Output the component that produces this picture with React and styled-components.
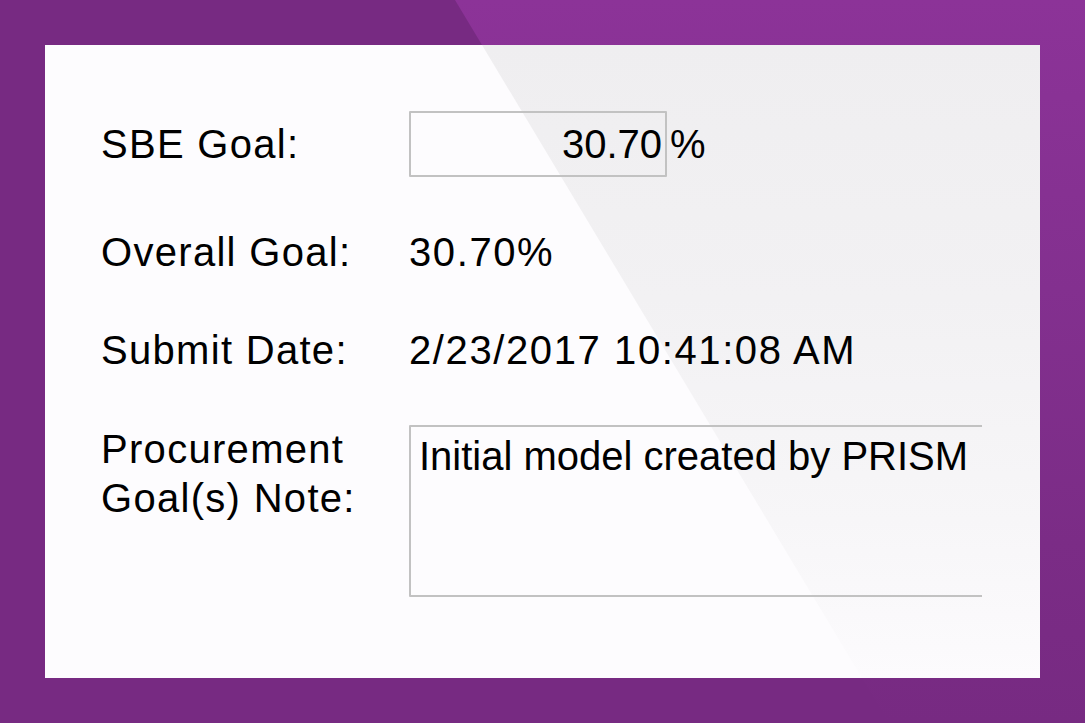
import React from "react";
import styled, { createGlobalStyle } from "styled-components";

const Global = createGlobalStyle`
  html, body { margin: 0; padding: 0; }
  body {
    background: #772a82;
    font-family: "Liberation Sans", Arial, sans-serif;
    overflow: hidden;
  }
`;

const Stage = styled.div`
  position: relative;
  width: 1085px;
  height: 723px;
  box-sizing: border-box;
  padding: 45px;
  background: #772a82;
  overflow: hidden;

  &::before {
    content: "";
    position: absolute;
    inset: 0;
    background: linear-gradient(to bottom, #8c3398 0%, #83308f 40%, #7b2c86 75%, #772a82 100%);
    clip-path: polygon(455px 0, 100% 0, 100% 100%, 889px 100%);
  }
`;

const Card = styled.section`
  position: relative;
  width: 995px;
  height: 633px;
  box-sizing: border-box;
  padding: 66px 0 0 56px;
  background: #fdfcfe;
  overflow: hidden;

  &::before {
    content: "";
    position: absolute;
    inset: 0;
    background: linear-gradient(to bottom, #efeef0 0%, #f2f1f3 40%, #f7f6f8 75%, #fcfbfd 100%);
    clip-path: polygon(437px 0, 100% 0, 100% 100%, 817px 100%);
  }
`;

const Form = styled.div`
  position: relative;
  display: grid;
  grid-template-columns: 308px 1fr;
  row-gap: 52px;
  align-items: center;
  color: #000;
  font-size: 40px;
  line-height: 46px;
`;

const Label = styled.div`
  white-space: nowrap;
  letter-spacing: 1.3px;
  line-height: ${(p) => p.$lh || "46px"};
  align-self: ${(p) => (p.$top ? "start" : "center")};
`;

const Value = styled.div`
  white-space: nowrap;
  letter-spacing: 1.6px;
`;

const InputRow = styled.div`
  display: flex;
  align-items: center;
  height: 66px;
`;

const NumberInput = styled.input`
  box-sizing: border-box;
  width: 258px;
  height: 66px;
  margin: 0;
  padding: 0 3px 0 0;
  border: 2px solid #c2c2c2;
  border-radius: 1px;
  background: transparent;
  font: inherit;
  font-size: 40px;
  color: #000;
  text-align: right;
  outline: none;
`;

const Suffix = styled.span`
  margin-left: 3px;
`;

const NoteClip = styled.div`
  width: 573px;
  height: 172px;
  overflow: hidden;
  align-self: start;
`;

const Note = styled.textarea`
  box-sizing: border-box;
  display: block;
  width: 640px;
  height: 172px;
  margin: 0;
  padding: 6px 8px;
  border: 2px solid #c2c2c2;
  border-radius: 1px;
  background: transparent;
  font: inherit;
  font-size: 40px;
  line-height: 46px;
  color: #000;
  resize: none;
  overflow: hidden;
  outline: none;
`;

export default function App() {
  return (
    <>
      <Global />
      <Stage>
        <Card>
          <Form>
            <Label>SBE Goal:</Label>
            <InputRow>
              <NumberInput readOnly value="30.70" />
              <Suffix>%</Suffix>
            </InputRow>

            <Label>Overall Goal:</Label>
            <Value>30.70%</Value>

            <Label>Submit Date:</Label>
            <Value>2/23/2017 10:41:08 AM</Value>

            <Label $top $lh="49px">
              Procurement
              <br />
              Goal(s) Note:
            </Label>
            <NoteClip>
              <Note readOnly defaultValue="Initial model created by PRISM" />
            </NoteClip>
          </Form>
        </Card>
      </Stage>
    </>
  );
}
